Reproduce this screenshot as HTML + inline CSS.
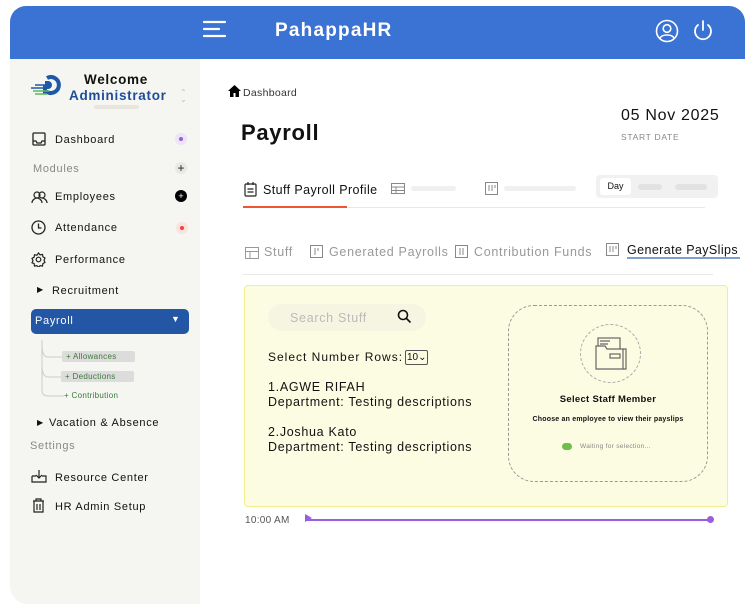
<!DOCTYPE html>
<html><head><meta charset="utf-8"><style>
*{margin:0;padding:0;box-sizing:border-box}
body{width:756px;height:614px;background:#fff;font-family:"Liberation Sans",sans-serif;position:relative;overflow:hidden;color:#111;letter-spacing:.7px}
.a{position:absolute;white-space:nowrap}
.hdr{left:10px;top:6px;width:735px;height:53px;background:#3b73d4;border-radius:16px 16px 0 0}
.side{left:10px;top:59px;width:190px;height:545px;background:#f5f5f1;border-radius:0 0 0 18px}
.nav{font-size:11px;color:#111}
.ic{position:absolute}
.dot{position:absolute;width:12px;height:12px;border-radius:6px;letter-spacing:0}
.gr{font-size:11px;color:#888}
.sub{font-size:8px;color:#3a7a3a;padding:1px 4px;border-radius:2px;letter-spacing:.3px}
.tab{font-size:12.5px;color:#999}
</style></head><body>
<div class="a hdr"></div>
<svg class="a" style="left:203px;top:20px" width="24" height="18"><g stroke="#fff" stroke-width="2.2" stroke-linecap="round"><line x1="1" y1="2" x2="22" y2="2"/><line x1="1" y1="9" x2="16" y2="9"/><line x1="1" y1="16" x2="22" y2="16"/></g></svg>
<div class="a" style="left:275px;top:20px;color:#fff;font-weight:bold;font-size:19px;letter-spacing:1.2px">PahappaHR</div>
<svg class="a" style="left:655px;top:19px" width="24" height="24" fill="none" stroke="#fff" stroke-width="1.6"><circle cx="12" cy="12" r="10.5"/><circle cx="12" cy="9.5" r="3.8"/><path d="M5 19c2-4 12-4 14 0"/></svg>
<svg class="a" style="left:692px;top:19px" width="22" height="24" fill="none" stroke="#fff" stroke-width="1.8" stroke-linecap="round"><line x1="11" y1="2" x2="11" y2="11"/><path d="M6 6a8 8 0 1 0 10 0"/></svg>

<div class="a side"></div>
<svg class="a" style="left:29px;top:75px" width="36" height="24"><path d="M18 3a8 8 0 1 1 0 14h-2v-5h3a2 2 0 0 0 0-4h-3" fill="none" stroke="#1f58a8" stroke-width="4"/><g stroke="#1f58a8" stroke-width="1.5"><line x1="2" y1="13" x2="18" y2="13"/><line x1="6" y1="10" x2="18" y2="10"/></g><g stroke="#5cb85c" stroke-width="1.5"><line x1="4" y1="16" x2="20" y2="16"/><line x1="6" y1="19" x2="18" y2="19"/></g></svg>
<div class="a" style="left:84px;top:72px;font-size:13.5px;font-weight:bold;color:#111">Welcome</div>
<div class="a" style="left:69px;top:88px;font-size:13.5px;font-weight:bold;color:#1f4d99">Administrator</div>
<div class="a" style="left:94px;top:105px;width:45px;height:4px;background:#e8e5dc;border-radius:2px"></div>
<div class="a" style="left:180px;top:89px;font-size:8px;color:#bbb;line-height:7px">⌃<br>⌄</div>

<svg class="ic" style="left:32px;top:132px" width="14" height="14" fill="none" stroke="#222" stroke-width="1.3"><rect x="1" y="1" width="12" height="12" rx="1"/><path d="M1 9h3l1 2h4l1-2h3"/></svg>
<div class="a nav" style="left:55px;top:134px">Dashboard</div>
<div class="dot" style="left:175px;top:133px;background:#ece4f7"></div><div class="dot" style="left:179px;top:137px;width:4px;height:4px;background:#9a5be0"></div>
<div class="a gr" style="left:33px;top:163px">Modules</div>
<div class="dot" style="left:175px;top:162px;background:#e8e8e4;font-size:12px;line-height:12px;text-align:center;color:#222">+</div>
<svg class="ic" style="left:31px;top:190px" width="17" height="14" fill="none" stroke="#222" stroke-width="1.2"><circle cx="6" cy="5" r="3"/><circle cx="11" cy="5" r="3"/><path d="M1 13c0-3 3-5 5-5s5 2 5 5M11 8c2 0 5 2 5 5"/></svg>
<div class="a nav" style="left:55px;top:191px">Employees</div>
<div class="dot" style="left:175px;top:190px;background:#000;color:#fff;font-size:9px;line-height:12px;text-align:center">+</div>
<svg class="ic" style="left:31px;top:220px" width="15" height="15" fill="none" stroke="#222" stroke-width="1.3"><circle cx="7.5" cy="7.5" r="6.5"/><path d="M7.5 3.5v4.5h3"/></svg>
<div class="a nav" style="left:55px;top:222px">Attendance</div>
<div class="dot" style="left:176px;top:222px;background:#fbe2dd"></div><div class="dot" style="left:180px;top:226px;width:4px;height:4px;background:#e44"></div>
<svg class="ic" style="left:31px;top:252px" width="15" height="15" fill="none" stroke="#222" stroke-width="1.2"><circle cx="7.5" cy="7.5" r="2.3"/><path d="M7.5 1l1.6 1.8 2.4-.4.4 2.4 2.1 1.2-1 2.2 1 2.2-2.1 1.2-.4 2.4-2.4-.4-1.6 1.8-1.6-1.8-2.4.4-.4-2.4L1 10.8l1-2.2-1-2.2 2.1-1.2.4-2.4 2.4.4z"/></svg>
<div class="a nav" style="left:55px;top:254px">Performance</div>
<div class="a" style="left:37px;top:285px;font-size:8px">▶</div>
<div class="a nav" style="left:52px;top:285px">Recruitment</div>
<div class="a" style="left:31px;top:309px;width:158px;height:25px;background:#2456a6;border-radius:5px"></div>
<div class="a" style="left:35px;top:315px;color:#fff;font-size:11px">Payroll</div>
<div class="a" style="left:171px;top:314px;color:#fff;font-size:9px">▼</div>
<svg class="a" style="left:40px;top:340px" width="25" height="60" fill="none" stroke="#ccc" stroke-width="1"><path d="M2 0v50q0 6 6 6h16M2 5q0 12 6 12h14M2 25q0 12 6 12h14"/></svg>
<div class="a sub" style="left:62px;top:351px;background:#dcdcdc;width:73px">+ Allowances</div>
<div class="a sub" style="left:61px;top:371px;background:#dcdcdc;width:73px">+ Deductions</div>
<div class="a sub" style="left:60px;top:390px">+ Contribution</div>
<div class="a" style="left:37px;top:418px;font-size:8px">▶</div>
<div class="a nav" style="left:49px;top:417px">Vacation &amp; Absence</div>
<div class="a gr" style="left:30px;top:440px">Settings</div>
<svg class="ic" style="left:31px;top:469px" width="16" height="14" fill="none" stroke="#222" stroke-width="1.2"><path d="M1 7v6h14V7h-4M5 7H1M8 1v8M5 6l3 3 3-3"/></svg>
<div class="a nav" style="left:55px;top:472px">Resource Center</div>
<svg class="ic" style="left:32px;top:498px" width="13" height="15" fill="none" stroke="#222" stroke-width="1.2"><path d="M1 3h11M4 3V1h5v2M2 3v11h9V3M5 6v6M8 6v6"/></svg>
<div class="a nav" style="left:55px;top:501px">HR Admin Setup</div>

<svg class="a" style="left:228px;top:85px" width="13" height="12"><path d="M6.5 0L0 6h2v6h3.5V8h2v4H11V6h2z" fill="#000"/></svg>
<div class="a" style="left:243px;top:87px;font-size:10.5px;color:#333;letter-spacing:.3px">Dashboard</div>
<div class="a" style="left:241px;top:120px;font-size:22px;font-weight:bold;color:#111">Payroll</div>
<div class="a" style="left:621px;top:107px;font-size:16px;color:#111">05 Nov 2025</div>
<div class="a" style="left:621px;top:132px;font-size:8.5px;color:#888">START DATE</div>

<svg class="a" style="left:244px;top:182px" width="13" height="15" fill="none" stroke="#222" stroke-width="1.2"><rect x="1" y="2" width="11" height="12" rx="1"/><path d="M4 0v3M9 0v3M3.5 7h6M3.5 10h6"/></svg>
<div class="a" style="left:263px;top:183px;font-size:12.5px;color:#111;letter-spacing:.4px">Stuff Payroll Profile</div>
<svg class="a" style="left:391px;top:183px" width="14" height="11" fill="none" stroke="#888" stroke-width="1"><rect x=".5" y=".5" width="13" height="10"/><path d="M.5 4h13M.5 7.5h13M5 4v6.5"/></svg>
<div class="a" style="left:411px;top:186px;width:45px;height:5px;background:#f0f0f0;border-radius:3px"></div>
<svg class="a" style="left:485px;top:182px" width="13" height="13" fill="none" stroke="#888" stroke-width="1"><rect x=".5" y=".5" width="12" height="12"/><path d="M4 3v6M7 3v6M10 3v3"/></svg>
<div class="a" style="left:504px;top:186px;width:72px;height:5px;background:#f0f0f0;border-radius:3px"></div>
<div class="a" style="left:596px;top:175px;width:122px;height:23px;background:#f1f1f1;border-radius:4px"></div>
<div class="a" style="left:600px;top:178px;width:31px;height:17px;background:#fff;border-radius:3px;font-size:9px;text-align:center;line-height:17px;letter-spacing:0">Day</div>
<div class="a" style="left:638px;top:184px;width:24px;height:6px;background:#e2e2e2;border-radius:3px"></div>
<div class="a" style="left:675px;top:184px;width:32px;height:6px;background:#e2e2e2;border-radius:3px"></div>
<div class="a" style="left:243px;top:207px;width:462px;height:1px;background:#e8e8e8"></div>
<div class="a" style="left:243px;top:206px;width:104px;height:2px;background:#ee5533"></div>

<svg class="a" style="left:245px;top:247px" width="14" height="12" fill="none" stroke="#999" stroke-width="1"><rect x=".5" y=".5" width="13" height="11"/><path d="M.5 4.5h13M5 4.5v7"/></svg>
<div class="a tab" style="left:264px;top:245px">Stuff</div>
<svg class="a" style="left:310px;top:245px" width="13" height="13" fill="none" stroke="#888" stroke-width="1"><rect x=".5" y=".5" width="12" height="12"/><path d="M5 3v7M8 3v3"/></svg>
<div class="a tab" style="left:329px;top:245px">Generated Payrolls</div>
<svg class="a" style="left:455px;top:245px" width="13" height="13" fill="none" stroke="#888" stroke-width="1"><rect x=".5" y=".5" width="12" height="12"/><path d="M5 3v7M8 3v7"/></svg>
<div class="a tab" style="left:474px;top:245px">Contribution Funds</div>
<svg class="a" style="left:606px;top:243px" width="13" height="13" fill="none" stroke="#888" stroke-width="1"><rect x=".5" y=".5" width="12" height="12"/><path d="M4 3v6M7 3v6M10 3v3"/></svg>
<div class="a" style="left:627px;top:243px;font-size:12.5px;color:#111;letter-spacing:.4px">Generate PaySlips</div>
<div class="a" style="left:627px;top:257px;width:113px;height:2px;background:#7f9fd0"></div>
<div class="a" style="left:243px;top:274px;width:470px;height:1px;background:#e8e8e8"></div>

<div class="a" style="left:244px;top:285px;width:484px;height:222px;background:#fcfce2;border:1px solid #f2f08a;border-radius:4px"></div>
<div class="a" style="left:268px;top:304px;width:158px;height:27px;background:#f5f5e2;border-radius:14px"></div>
<div class="a" style="left:290px;top:311px;font-size:12.5px;color:#bbb">Search Stuff</div>
<svg class="a" style="left:397px;top:309px" width="15" height="15" fill="none" stroke="#111" stroke-width="1.6"><circle cx="6" cy="6" r="4.5"/><path d="M9.5 9.5l4 4"/></svg>
<div class="a" style="left:268px;top:350px;font-size:12px;letter-spacing:1px">Select Number Rows:</div>
<div class="a" style="left:405px;top:350px;width:23px;height:15px;border:1.3px solid #555;border-radius:2px;font-size:10px;line-height:13px;padding-left:1px;letter-spacing:0">10⌄</div>
<div class="a" style="left:268px;top:380px;font-size:12.5px;line-height:15px">1.AGWE RIFAH<br>Department: Testing descriptions</div>
<div class="a" style="left:268px;top:425px;font-size:12.5px;line-height:15px">2.Joshua Kato<br>Department: Testing descriptions</div>

<div class="a" style="left:508px;top:305px;width:200px;height:177px;border:1.3px dashed #999;border-radius:26px"></div>
<div class="a" style="left:580px;top:324px;width:61px;height:59px;border:1.2px dashed #aaa;border-radius:50%"></div>
<svg class="a" style="left:594px;top:336px" width="36" height="36" fill="none" stroke="#666" stroke-width="1.2"><rect x="4" y="2" width="22" height="12"/><path d="M6 5h10M6 8h8"/><path d="M2 10h9l2 3h16v20H2z" fill="#fcfce2"/><rect x="16" y="18" width="10" height="4"/><path d="M29 13h3v20h-3"/></svg>
<div class="a" style="left:508px;top:394px;width:200px;text-align:center;font-size:9.5px;font-weight:bold;letter-spacing:.3px">Select Staff Member</div>
<div class="a" style="left:508px;top:416px;width:200px;text-align:center;font-size:7px;font-weight:bold;letter-spacing:.2px">Choose an employee to view their payslips</div>
<div class="a" style="left:562px;top:443px;width:10px;height:7px;background:#6cc04a;border-radius:4px"></div>
<div class="a" style="left:580px;top:443px;font-size:6.5px;color:#888;letter-spacing:.3px">Waiting for selection...</div>

<div class="a" style="left:245px;top:515px;font-size:10px;color:#555;letter-spacing:.3px">10:00 AM</div>
<div class="a" style="left:306px;top:519px;width:404px;height:1.5px;background:#9a5ce0"></div>
<div class="a" style="left:305px;top:514px;width:0;height:0;border-left:7px solid #9a5ce0;border-top:4px solid transparent;border-bottom:4px solid transparent"></div>
<div class="a" style="left:707px;top:516px;width:7px;height:7px;border-radius:50%;background:#9a5ce0"></div>
</body></html>
